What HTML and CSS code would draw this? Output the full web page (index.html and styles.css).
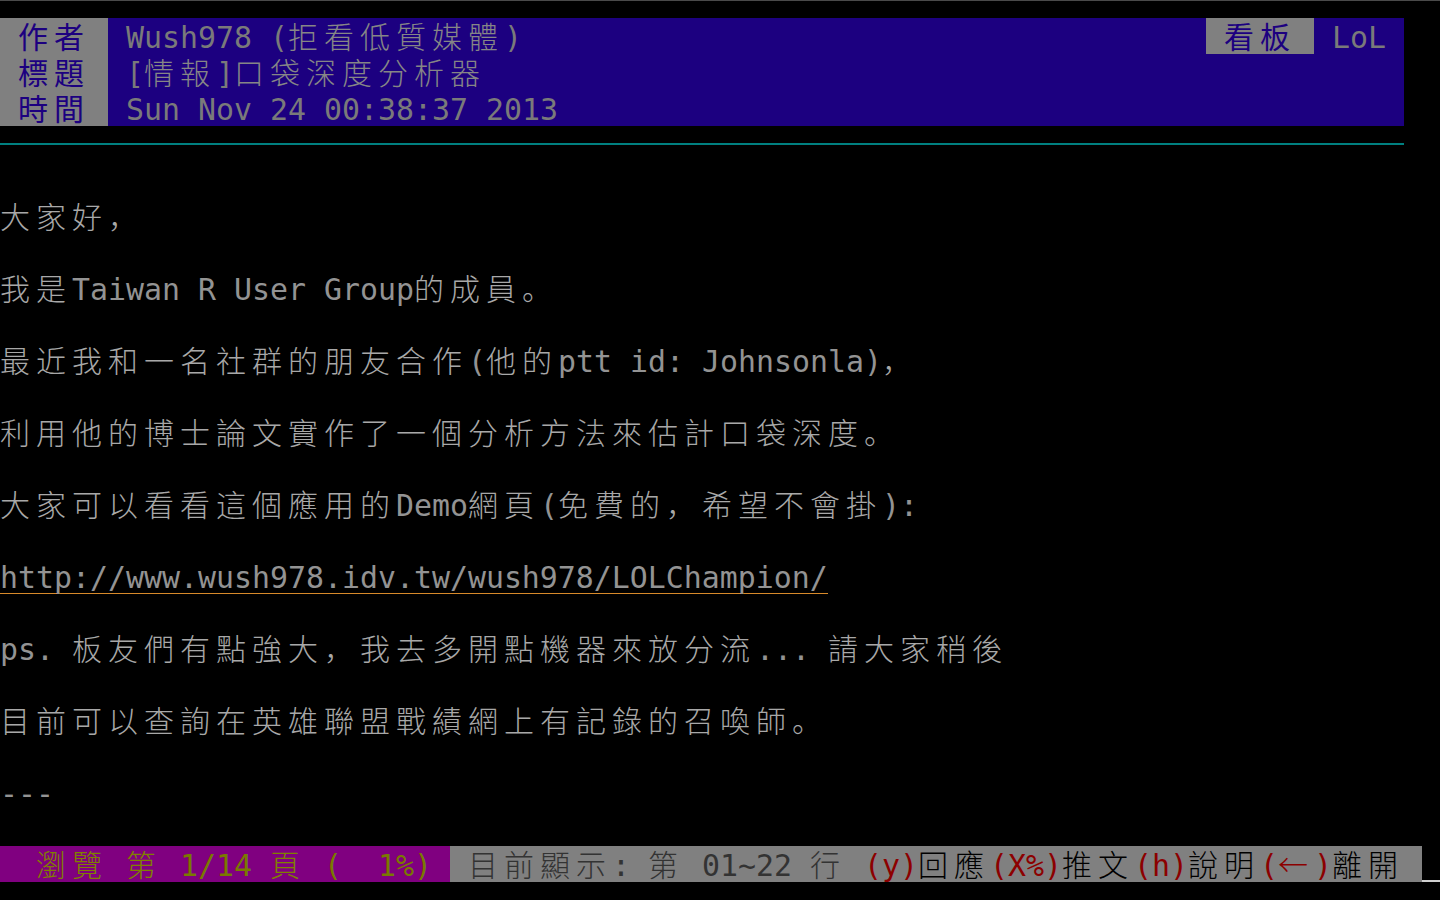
FILE: index.html
```html
<!DOCTYPE html>
<html lang="zh-Hans">
<head>
<meta charset="utf-8">
<title>[情報]口袋深度分析器 - LoL</title>
<link rel="stylesheet" href="styles.css">
</head>
<body>
<div class="screen">
  <div class="header">
    <div class="hrow"><span class="lbl"> <span class="c">作者</span> </span><span class="val"> Wush978 (<span class="c">拒看低質媒體</span>)</span><span class="lbl"> <span class="c">看板</span> </span><span class="val"> LoL </span></div>
    <div class="hrow"><span class="lbl"> <span class="c">標題</span> </span><span class="val"> [<span class="c">情報</span>]<span class="c">口袋深度分析器</span></span></div>
    <div class="hrow"><span class="lbl"> <span class="c">時間</span> </span><span class="val"> Sun Nov 24 00:38:37 2013</span></div>
  </div>
  <div class="row rulerow"><div class="rule"></div></div>
  <div class="row"></div>
  <div class="row"><span class="c">大家好，</span></div>
  <div class="row"></div>
  <div class="row"><span class="c">我是</span>Taiwan R User Group<span class="c">的成員。</span></div>
  <div class="row"></div>
  <div class="row"><span class="c">最近我和一名社群的朋友合作</span>(<span class="c">他的</span>ptt id: Johnsonla)<span class="c">，</span></div>
  <div class="row"></div>
  <div class="row"><span class="c">利用他的博士論文實作了一個分析方法來估計口袋深度。</span></div>
  <div class="row"></div>
  <div class="row"><span class="c">大家可以看看這個應用的</span>Demo<span class="c">網頁</span>(<span class="c">免費的，希望不會掛</span>):</div>
  <div class="row"></div>
  <div class="row"><span class="link">http://www.wush978.idv.tw/wush978/LOLChampion/</span></div>
  <div class="row"></div>
  <div class="row">ps. <span class="c">板友們有點強大，我去多開點機器來放分流</span>... <span class="c">請大家稍後</span></div>
  <div class="row"></div>
  <div class="row"><span class="c">目前可以查詢在英雄聯盟戰績網上有記錄的召喚師。</span></div>
  <div class="row"></div>
  <div class="row">---</div>
  <div class="row"></div>
  <div class="row status"><span class="pager">  <span class="c">瀏覽</span> <span class="c">第</span> 1/14 <span class="c">頁</span> (  1%) </span><span class="hint"> <span class="c">目前顯示</span>: <span class="c">第</span> 01~22 <span class="c">行</span> <span class="key">(y)</span><span class="cmd c">回應</span><span class="key">(X%)</span><span class="cmd c">推文</span><span class="key">(h)</span><span class="cmd c">說明</span><span class="key">(<span class="c">←</span>)</span><span class="cmd c">離開</span> </span><span class="cursor"></span></div>
</div>
</body>
</html>
```

FILE: styles.css
```css
html, body {
  margin: 0;
  padding: 0;
  background: #000;
  height: 900px;
  overflow: hidden;
}

.screen {
  width: 1440px;
  height: 899px;
  border-top: 1px solid #4a4a4a;
  padding-top: 17px;
  box-sizing: border-box;
  color: #939393;
  font-family: "DejaVu Sans Mono", "Noto Sans CJK SC", monospace;
  font-size: 29.9px;
}

.row, .hrow {
  height: 36px;
  line-height: 40px;
  white-space: pre;
}

.c {
  font-family: "Noto Sans CJK SC", "Noto Sans CJK TC", sans-serif;
  font-size: 30px;
  font-weight: 300;
  line-height: 28px;
  letter-spacing: 6px;
}

.row > .c {
  color: #a8a8a8;
}

.header {
  width: 1404px;
  background: #1c0080;
  color: #7a7a7a;
}

.hrow {
  display: flex;
}

.lbl {
  background: #808080;
  color: #1c0080;
  height: 36px;
}

.lbl .c {
  font-weight: 400;
}

.val {
  color: #7a7a7a;
}

.val .c {
  color: #868686;
}

.hrow .val:nth-child(2) {
  flex: 1;
}

.rulerow {
  display: flex;
  align-items: center;
}

.rule {
  width: 1404px;
  height: 2px;
  background: #008080;
}

.link {
  display: inline-block;
  height: 35px;
  border-bottom: 1px solid #d88a2a;
}

.status {
  display: flex;
}

.pager {
  background: #800080;
  color: #7a7a00;
  height: 36px;
}

.pager .c {
  color: #808000;
}

.hint {
  background: #808080;
  color: #333333;
  height: 36px;
}

.key {
  color: #8c0000;
}

.cmd {
  color: #000;
}

.cursor {
  width: 18px;
  height: 34px;
  border-bottom: 2px solid #d0d0d0;
}
```
